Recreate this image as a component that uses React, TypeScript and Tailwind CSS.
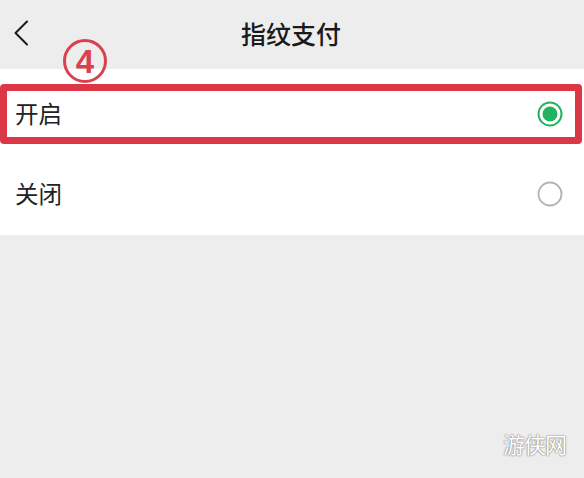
import React from "react";

const font = { fontFamily: '"Noto Sans CJK SC", "Noto Sans", sans-serif' };

function RadioOn() {
  return (
    <svg width="26" height="26" viewBox="0 0 26 26">
      <circle cx="13" cy="13" r="11.5" fill="none" stroke="#22b35e" strokeWidth="2" />
      <circle cx="13" cy="13" r="7.5" fill="#22b35e" />
    </svg>
  );
}

function RadioOff() {
  return (
    <svg width="26" height="26" viewBox="0 0 26 26">
      <circle cx="13" cy="13" r="11.5" fill="none" stroke="#b3b3b3" strokeWidth="1.8" />
    </svg>
  );
}

export default function App() {
  return (
    <div className="relative w-[584px] h-[478px] bg-[#ededed] overflow-hidden" style={font}>
      {/* Header */}
      <div className="relative h-[69px] flex items-center justify-center">
        <svg
          className="absolute left-[13px] top-[20px]"
          width="16"
          height="26"
          viewBox="0 0 16 26"
        >
          <path d="M14 1.5 L2.5 13 L14 24.5" fill="none" stroke="#1a1a1a" strokeWidth="2" strokeLinecap="round" strokeLinejoin="round" />
        </svg>
        <span className="text-[25px] leading-none font-medium text-[#1a1a1a] ml-[-2px] mt-[-2px]">指纹支付</span>
      </div>

      {/* List */}
      <div className="bg-white pt-[15px]">
        <div className="h-[60px] mr-[2px] border-[7px] border-[#db3744] rounded-[4px] flex items-center justify-between pl-[8px] pr-[12px]">
          <span className="text-[23.5px] leading-none text-[#222]">开启</span>
          <RadioOn />
        </div>
        <div className="h-[91px] flex items-center justify-between pl-[15px] pr-[21px] pt-[9px]">
          <span className="text-[23.5px] leading-none text-[#222]">关闭</span>
          <RadioOff />
        </div>
      </div>

      {/* Annotation ④ */}
      <div className="absolute left-[63px] top-[39px] w-[44px] h-[44px] rounded-full border-[3px] border-[#d9414f] flex items-center justify-center">
        <span className="text-[33px] leading-none font-bold text-[#d9414f] mt-[1px]" style={{ fontFamily: '"Liberation Sans", Arial, sans-serif' }}>4</span>
      </div>

      {/* Watermark */}
      <div
        className="absolute left-[503px] top-[432px] text-[22px] leading-none text-white tracking-[-1px]"
        style={{ textShadow: "0 0 2px #888, 0 0 1px #666" }}
      >
        游侠网
      </div>
    </div>
  );
}
